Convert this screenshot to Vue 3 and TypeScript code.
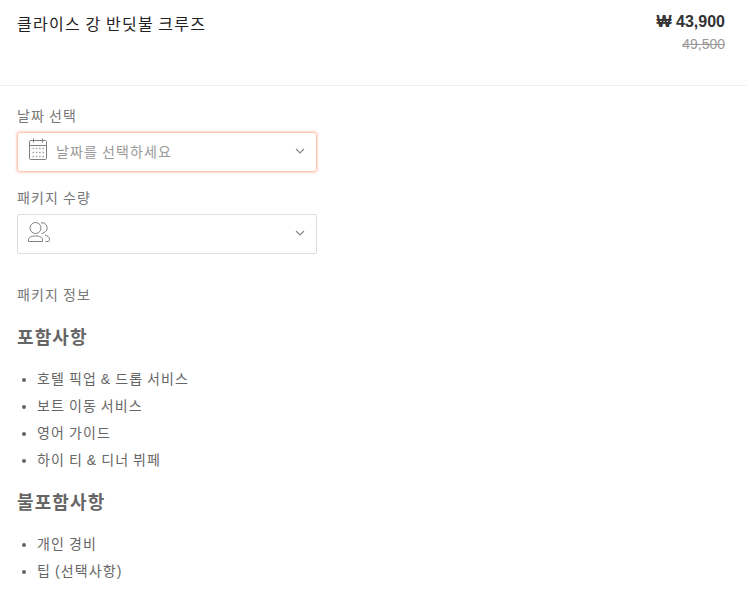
<script setup lang="ts">
const included: string[] = ['호텔 픽업 & 드롭 서비스', '보트 이동 서비스', '영어 가이드', '하이 티 & 디너 뷔페']
const excluded: string[] = ['개인 경비', '팁 (선택사항)']
</script>

<template>
  <div class="page">
    <header class="head">
      <h1 class="title ko">클라이스 강 반딧불 크루즈</h1>
      <div class="prices">
        <div class="price">₩ 43,900</div>
        <div class="old">49,500</div>
      </div>
    </header>
    <section class="body ko">
      <div class="label first">날짜 선택</div>
      <div class="select focus">
        <svg class="icon cal" width="20" height="22" viewBox="0 0 20 22" fill="none" stroke="#808080" stroke-width="1">
          <rect x="1.5" y="2.5" width="17" height="19" rx="1" />
          <path d="M1.500 7.500h17M5.500 0.500v4M14.500 0.500v4" />
          <path stroke="#aaa" stroke-width="1.400" stroke-dasharray="1.600 1.700" d="M4.500 10.500h11.500M4.500 14.500h11.500M4.500 18.500h11.500" />
        </svg>
        <span class="placeholder">날짜를 선택하세요</span>
        <svg class="chev" width="10" height="6" viewBox="0 0 10 6" fill="none" stroke="#888" stroke-width="1.2"><path d="M1 1l4 4 4-4" /></svg>
      </div>
      <div class="label second">패키지 수량</div>
      <div class="select">
        <svg class="icon users" width="22" height="20" viewBox="0 0 22 20" fill="none" stroke="#808080" stroke-width="1">
          <circle cx="7.500" cy="6" r="5.500" />
          <path d="M.5 19.500v-1.500c0-2.500 2.500-4 7-4s7 1.500 7 4v1.500z" />
          <path d="M13 1a5 5 0 0 1 3 9.500 4 4 0 0 1-2.500 1M17 13c2.500.7 4.500 2.200 4.500 4 0 1-.3 1.800-1 2.500h-3" />
        </svg>
        <svg class="chev" width="10" height="6" viewBox="0 0 10 6" fill="none" stroke="#888" stroke-width="1.2"><path d="M1 1l4 4 4-4" /></svg>
      </div>
      <div class="label third">패키지 정보</div>
      <h2 class="sub">포함사항</h2>
      <ul class="list">
        <li v-for="item in included" :key="item">{{ item }}</li>
      </ul>
      <h2 class="sub">불포함사항</h2>
      <ul class="list">
        <li v-for="item in excluded" :key="item">{{ item }}</li>
      </ul>
    </section>
  </div>
</template>

<style>
html, body { margin: 0; background: #fff; overflow: hidden; }
</style>

<style scoped>
.page {
  width: 746px;
  height: 592px;
  overflow: hidden;
  font-family: "Liberation Sans", "Noto Sans CJK KR", sans-serif;
  color: #666;
  font-size: 14px;
}
.ko { letter-spacing: 0.08em; word-spacing: -0.08em; }
.head {
  display: flex;
  justify-content: space-between;
  align-items: flex-start;
  height: 86px;
  padding: 12px 21px 0 17px;
  box-sizing: border-box;
  border-bottom: 1px solid #eee;
}
.title {
  margin: 1px 0 0;
  font-size: 16px;
  line-height: 24px;
  font-weight: 400;
  color: #222;
}
.prices { text-align: right; }
.price { font-size: 16px; line-height: 20px; font-weight: 700; color: #333; }
.old { margin-top: 2px; font-size: 14px; line-height: 20px; color: #999; text-decoration: line-through; }
.body { padding: 0 17px; }
.label { line-height: 20px; font-size: 14px; color: #777; }
.first { margin-top: 20px; }
.second { margin-top: 16px; }
.third { margin-top: 31px; }
.select {
  width: 300px;
  height: 40px;
  margin-top: 6px;
  box-sizing: border-box;
  border: 1px solid #ddd;
  border-radius: 2px;
  display: flex;
  align-items: center;
  padding: 0 11px 0 10px;
}
.focus {
  border-color: #ffc4b4;
  border-radius: 3px;
  box-shadow: 0 0 2px 1px rgba(255, 185, 160, 0.55);
}
.icon { flex: none; }
.cal { margin-top: -6px; }
.users { margin-top: -4px; }
.placeholder { margin-left: 8px; color: #999; margin-top: -2px; }
.chev { margin-left: auto; flex: none; margin-top: -3px; }
.sub { margin: 20px 0 0; font-size: 18px; line-height: 26px; font-weight: 700; color: #666; }
.list { margin: 15px 0 0; padding: 0 0 0 20px; list-style: disc; }
.list li { line-height: 27px; font-size: 14px; color: #666; }
.list + .sub { margin-top: 16px; }
</style>
